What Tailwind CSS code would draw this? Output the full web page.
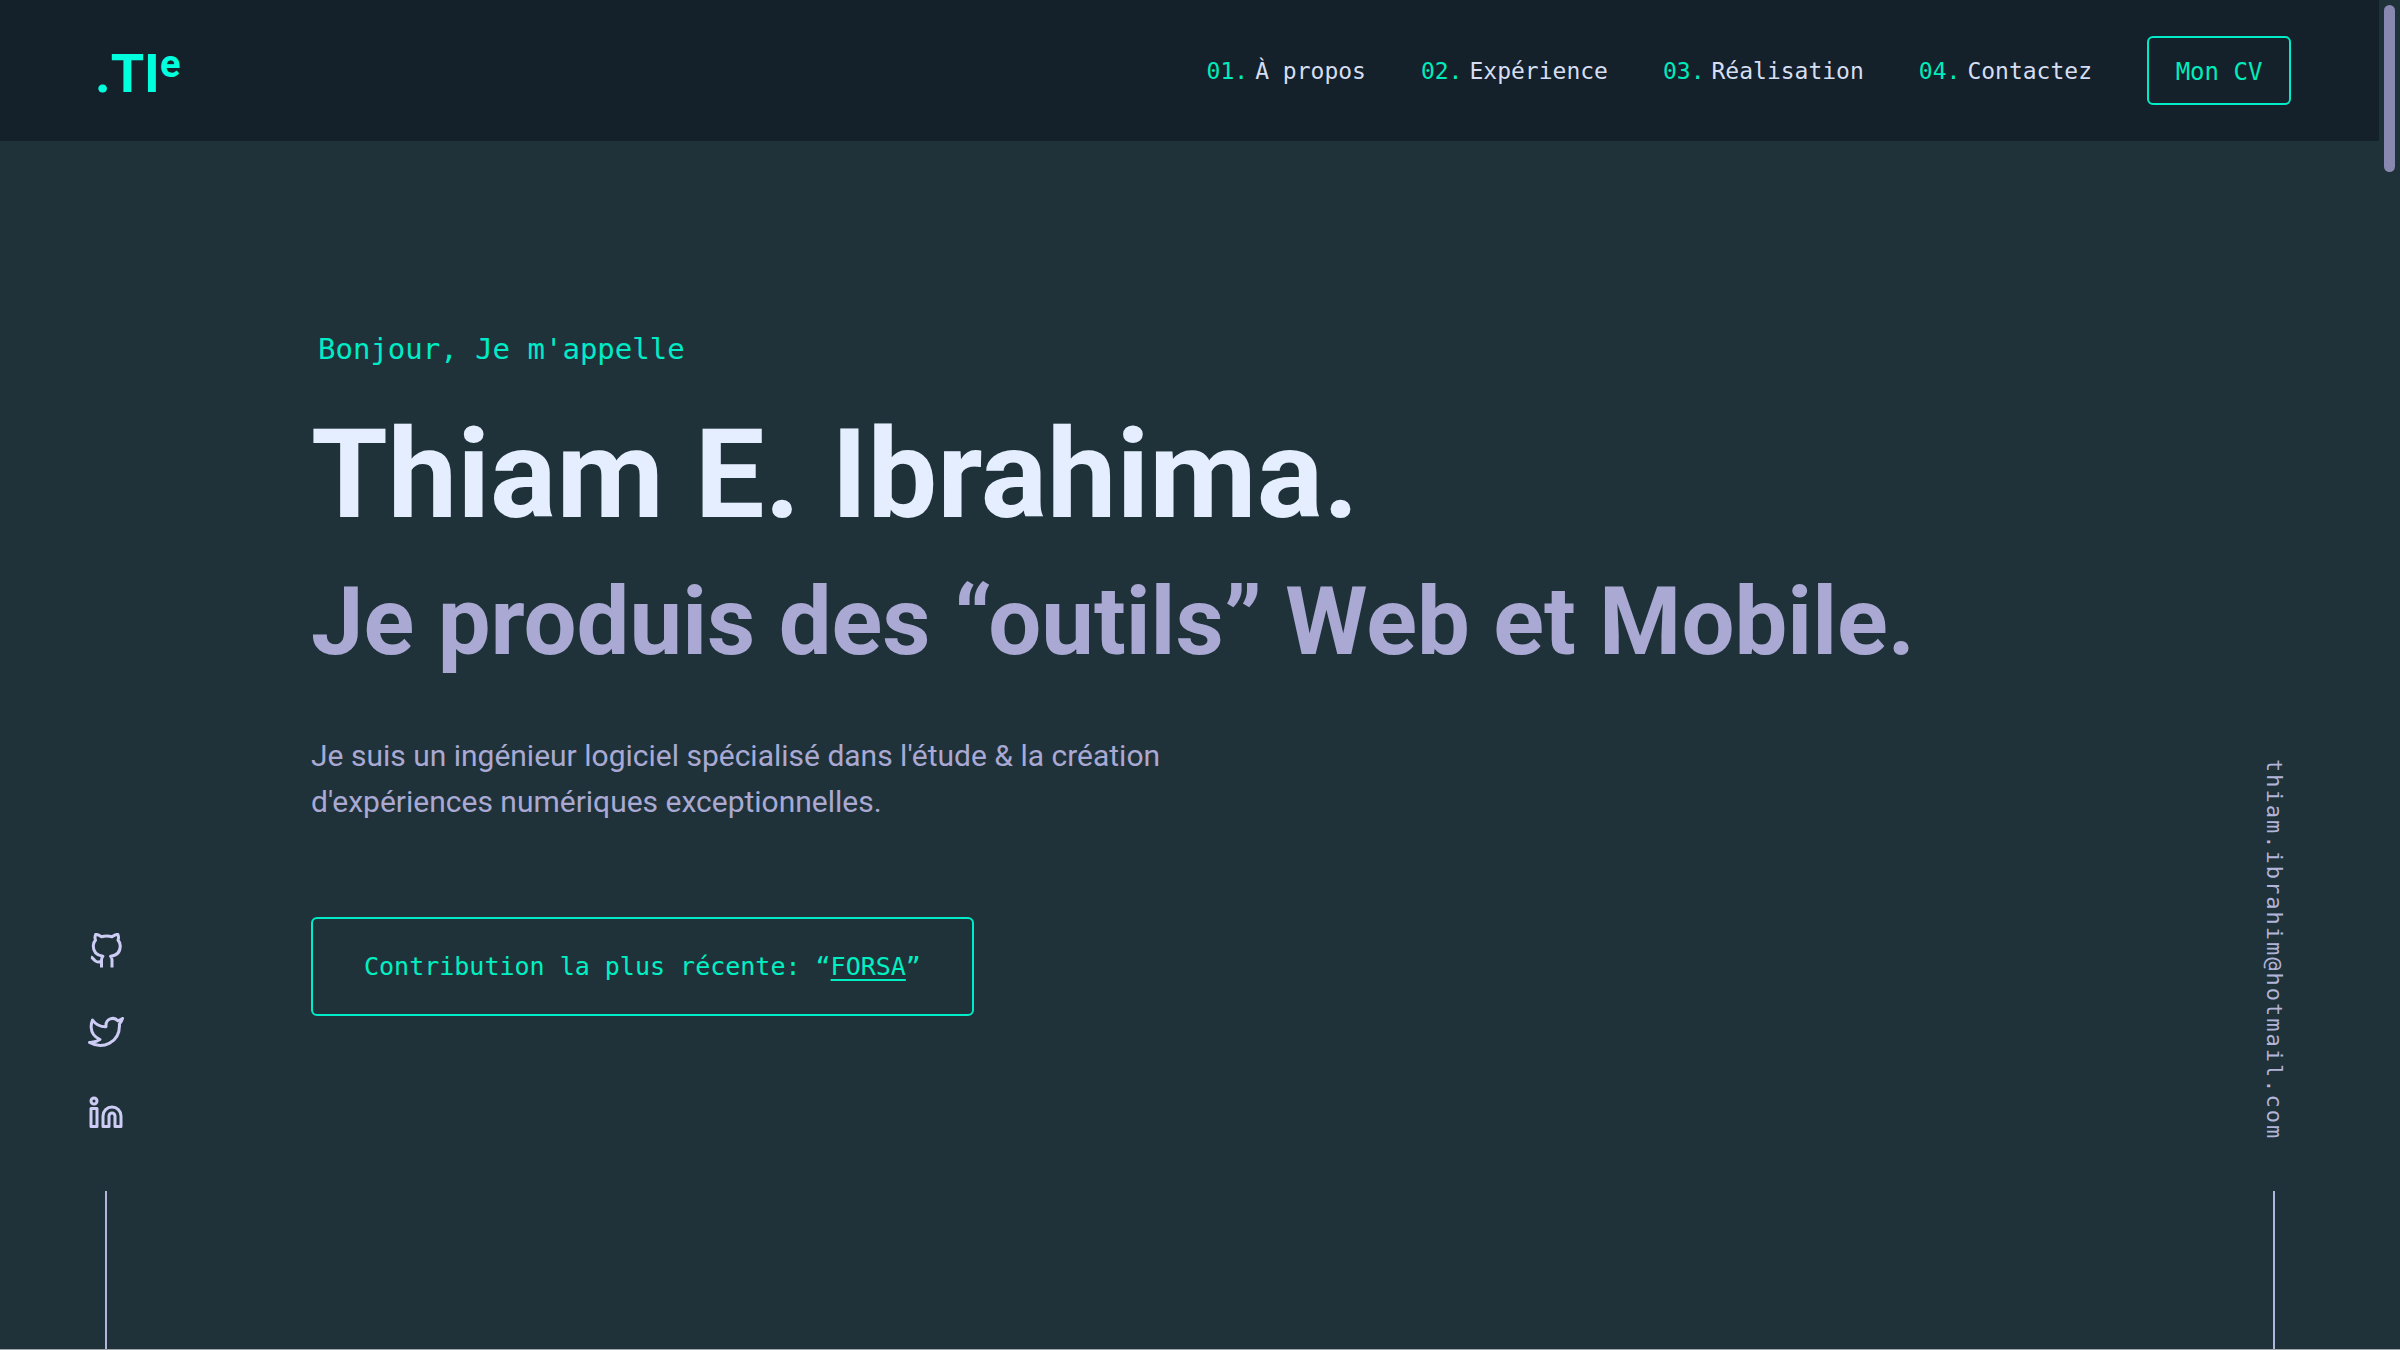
<!DOCTYPE html>
<html lang="fr">
<head>
<meta charset="utf-8">
<meta name="viewport" content="width=device-width, initial-scale=1">
<title>Thiam E. Ibrahima</title>
<script src="https://cdn.jsdelivr.net/npm/@tailwindcss/browser@4"></script>
</head>
<body class="min-h-screen bg-[#1f3239] pr-[21px] font-['Roboto',sans-serif] text-[#a9a9d3]">
<div class="flex min-h-screen flex-col">
  <header class="flex h-[141px] items-center justify-between bg-[#15212a] pr-[88px] pl-[95px]">
    <a href="#" class="flex items-start pt-[6px] text-[54px] leading-[54px] font-bold text-[#00ffdd]" aria-label="Accueil">.TI<span class="text-[38px] leading-[34px]">e</span></a>
    <nav class="flex items-center gap-[55px] font-['DejaVu_Sans_Mono',monospace] text-[23px] leading-[28px] text-[#d5def2]">
      <a href="#apropos" class="flex gap-[7px]"><span class="text-[#00ebbd]">01.</span>À propos</a>
      <a href="#experience" class="flex gap-[7px]"><span class="text-[#00ebbd]">02.</span>Expérience</a>
      <a href="#realisation" class="flex gap-[7px]"><span class="text-[#00ebbd]">03.</span>Réalisation</a>
      <a href="#contact" class="flex gap-[7px]"><span class="text-[#00ebbd]">04.</span>Contactez</a>
      <button type="button" class="h-[69px] w-[144px] rounded-md border-2 border-[#00ebc7] pt-[2px] text-[24px] text-[#00ebbd]">Mon CV</button>
    </nav>
  </header>

  <div class="flex grow justify-between">
    <aside class="flex w-[212px] flex-col items-center justify-end gap-[60px]" aria-label="Réseaux sociaux">
      <div class="flex flex-col gap-[45px] text-[#ccccf5]">
        <a href="#github" aria-label="GitHub"><svg class="size-9" viewBox="0 0 24 24" fill="none" stroke="currentColor" stroke-width="2" stroke-linejoin="round"><path d="M9 19c-5 1.5-5-2.5-7-3m14 7v-4.87a3.37 3.37 0 0 0-.94-2.61c3.14-.35 6.44-1.54 6.44-7A5.44 5.44 0 0 0 20 4.77 5.07 5.07 0 0 0 19.91 1S18.73.65 16 2.48a13.38 13.38 0 0 0-7 0C6.27.65 5.09 1 5.09 1A5.07 5.07 0 0 0 5 4.77a5.44 5.44 0 0 0-1.5 3.78c0 5.42 3.3 6.61 6.44 7A3.37 3.37 0 0 0 9 18.13V23"/></svg></a>
        <a href="#twitter" aria-label="Twitter"><svg class="size-9" viewBox="0 0 24 24" fill="none" stroke="currentColor" stroke-width="2" stroke-linecap="round" stroke-linejoin="round"><path d="M23 3a10.9 10.9 0 0 1-3.14 1.53 4.48 4.48 0 0 0-7.86 3v1A10.66 10.66 0 0 1 3 4s-4 9 5 13a11.64 11.64 0 0 1-7 2c9 5 20 0 20-11.5a4.5 4.5 0 0 0-.08-.83A7.72 7.72 0 0 0 23 3z"/></svg></a>
        <a href="#linkedin" aria-label="LinkedIn"><svg class="size-9" viewBox="0 0 24 24" fill="none" stroke="currentColor" stroke-width="2" stroke-linecap="round" stroke-linejoin="round"><path d="M16 8a6 6 0 0 1 6 6v7h-4v-7a2 2 0 0 0-4 0v7h-4v-7a6 6 0 0 1 6-6z"/><path d="M2 9h4v12H2z"/><circle cx="4" cy="4" r="2"/></svg></a>
      </div>
      <div class="h-[159px] w-[2px] bg-[#b3b4da]"></div>
    </aside>

    <main class="flex grow flex-col items-start pt-[184px] pl-[99px]">
      <p class="pl-[7px] font-['DejaVu_Sans_Mono',monospace] text-[29px] leading-[48px] text-[#00ebc7]">Bonjour, Je m'appelle</p>
      <h1 class="mt-[34px] text-[124px] leading-[136px] font-bold text-[#e5eeff]">Thiam E. Ibrahima.</h1>
      <h2 class="mt-[27px] text-[94px] leading-[104px] font-bold text-[#a9a9d3]">Je produis des “outils” Web et Mobile.</h2>
      <p class="mt-[59px] text-[30px] leading-[46px]">Je suis un ingénieur logiciel spécialisé dans l'étude &amp; la création<br>d'expériences numériques exceptionnelles.</p>
      <button type="button" class="mt-[92px] h-[99px] rounded-md border-2 border-[#00ebc7] px-[51px] font-['DejaVu_Sans_Mono',monospace] text-[25px] text-[#00f0c4]">Contribution la plus récente: “<span class="underline underline-offset-4">FORSA</span>”</button>
    </main>

    <aside class="flex w-[210px] flex-col items-center justify-end gap-[51px]" aria-label="Adresse e-mail">
      <a href="mailto:thiam.ibrahim@hotmail.com" class="font-['DejaVu_Sans_Mono',monospace] text-[22px] leading-[28px] tracking-[2px] text-[#b3b4da] [writing-mode:vertical-rl]">thiam.ibrahim@hotmail.com</a>
      <div class="h-[159px] w-[2px] bg-[#b3b4da]"></div>
    </aside>
  </div>
</div>
<div class="fixed top-[5px] right-[5px] h-[167px] w-[11px] rounded-full bg-[#8888b0]"></div>
<div class="fixed inset-x-0 bottom-0 h-px bg-[#9fa5a8]"></div>
</body>
</html>
